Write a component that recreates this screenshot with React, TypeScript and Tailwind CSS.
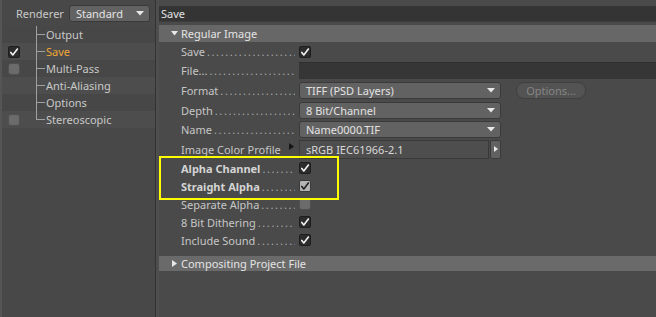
import React from "react";

const Check = ({ light = false }: { light?: boolean }) => (
  <svg width="10" height="10" viewBox="0 0 10 10" className="block">
    <path
      d="M1.8 5.4 L3.8 8 L8.4 2"
      fill="none"
      stroke={light ? "#222" : "#f2f2f2"}
      strokeWidth="1.6"
      strokeLinecap="round"
      strokeLinejoin="round"
    />
  </svg>
);

const Checkbox = ({ state }: { state: "on" | "off" | "hover" }) => {
  if (state === "on")
    return (
      <div className="w-[12px] h-[12px] rounded-[2px] border border-[#1e1e1e] bg-[#2c2c2c] flex items-center justify-center">
        <Check />
      </div>
    );
  if (state === "hover")
    return (
      <div className="w-[12px] h-[12px] rounded-[2px] border border-[#3a3a3a] bg-[#b4b4b4] flex items-center justify-center">
        <Check light />
      </div>
    );
  return <div className="w-[12px] h-[12px] rounded-[3px] border border-[#505050] bg-[#6b6b6b]" />;
};

const Arrow = () => (
  <svg width="8" height="5" viewBox="0 0 8 5" className="block shrink-0">
    <path d="M0 0 L8 0 L4 4.5 Z" fill="#e8e8e8" />
  </svg>
);

const Dropdown = ({ text, w }: { text: string; w: string }) => (
  <div
    className={`${w} h-[17px] rounded-[3px] border border-[#3a3a3a] bg-[#626262] flex items-center justify-between pl-[6px] pr-[5px] text-[#e2e2e2]`}
  >
    <span className="whitespace-nowrap">{text}</span>
    <Arrow />
  </div>
);

const Dots = () => (
  <span className="flex-1 overflow-hidden whitespace-nowrap text-[#a8a8a8] tracking-[1.6px] pl-[2px]">
    {"..................................."}
  </span>
);

const Label = ({ text, bold = false }: { text: string; bold?: boolean }) => (
  <div className="w-[140px] pl-[22px] pr-[4px] flex items-center whitespace-nowrap">
    <span className={bold ? "font-bold text-[#d4d4d4]" : "text-[#c6c6c6]"}>{text}</span>
    <Dots />
  </div>
);

const TreeRow = ({
  text,
  cb,
  active = false,
  last = false,
  light = false,
}: {
  text: string;
  cb?: "on" | "off";
  active?: boolean;
  last?: boolean;
  light?: boolean;
}) => (
  <div className={`h-[17px] flex items-stretch ${light ? "bg-[#4d4d4d]" : "bg-[#474747]"}`}>
    <div className="w-[34px] pl-[6px] flex items-center">{cb ? <Checkbox state={cb} /> : null}</div>
    <div className="w-[9px] flex flex-col">
      <div className="h-[9px] border-l border-b border-[#a0a0a0]" />
      <div className={`flex-1 ${last ? "" : "border-l border-[#a0a0a0]"}`} />
    </div>
    <div className={`flex items-center pl-[1px] ${active ? "text-[#f0a635]" : "text-[#c8c8c8]"}`}>{text}</div>
  </div>
);

export default function App() {
  return (
    <div
      className="w-[656px] h-[317px] bg-[#4a4a4a] flex overflow-hidden text-[11px] leading-none relative"
      style={{ fontFamily: '"Noto Sans", "DejaVu Sans", sans-serif' }}
    >
      {/* Left panel */}
      <div className="w-[155px] flex flex-col bg-[#484848] border-l-[2px] border-[#555]">
        <div className="h-[26px] flex items-center pl-[14px]">
          <span className="text-[#c8c8c8] mr-[5px]">Renderer</span>
          <Dropdown text="Standard" w="w-[81px]" />
        </div>
        <TreeRow text="Output" />
        <TreeRow text="Save" cb="on" active light />
        <TreeRow text="Multi-Pass" cb="off" />
        <TreeRow text="Anti-Aliasing" light />
        <TreeRow text="Options" />
        <TreeRow text="Stereoscopic" cb="off" last light />
        <div className="flex-1" />
      </div>

      {/* Separator */}
      <div className="w-[1px] bg-[#333]" />
      <div className="w-[3px] bg-[#4e4e4e]" />

      {/* Right panel */}
      <div className="flex-1 flex flex-col pt-[6px]">
        <div className="h-[16px] bg-[#343434] flex items-center pl-[2px] text-[#e2e2e2] border-b border-[#3c3c3c]">
          Save
        </div>
        <div className="h-[3px]" />
        <div className="h-[17px] bg-[#676767] flex items-center pl-[12px] text-[#e4e4e4]">
          <svg width="7" height="5" viewBox="0 0 7 5" className="mr-[3px]">
            <path d="M0 0 L7 0 L3.5 4.5 Z" fill="#e8e8e8" />
          </svg>
          Regular Image
        </div>

        <div className="h-[19px] flex items-center">
          <Label text="Save" />
          <Checkbox state="on" />
        </div>
        <div className="h-[19px] flex items-center">
          <Label text="File..." />
          <div className="flex-1 h-[17px] bg-[#363636] border-t border-[#2e2e2e]" />
        </div>
        <div className="h-[20px] flex items-center">
          <Label text="Format" />
          <Dropdown text="TIFF (PSD Layers)" w="w-[202px]" />
          <div className="ml-[15px] w-[70px] h-[17px] rounded-[8px] border border-[#404040] bg-[#535353] flex items-center justify-center text-[#858585]">
            Options...
          </div>
        </div>
        <div className="h-[20px] flex items-center">
          <Label text="Depth" />
          <Dropdown text="8 Bit/Channel" w="w-[202px]" />
        </div>
        <div className="h-[19px] flex items-center">
          <Label text="Name" />
          <Dropdown text="Name0000.TIF" w="w-[202px]" />
        </div>
        <div className="h-[20px] flex items-center">
          <div className="w-[140px] pl-[22px] pr-[4px] flex items-center whitespace-nowrap">
            <span className="text-[#c6c6c6]">Image Color Profile</span>
            <span className="flex-1" />
            <svg width="5" height="7" viewBox="0 0 5 7" className="mb-[6px] mr-[1px]">
              <path d="M0 0 L5 3.5 L0 7 Z" fill="#151515" />
            </svg>
          </div>
          <div className="w-[190px] h-[19px] border border-[#3a3a3a] bg-[#4e4e4e] flex items-center pl-[6px] text-[#d8d8d8]">
            sRGB IEC61966-2.1
          </div>
          <div className="ml-[1px] w-[11px] h-[19px] rounded-[2px] border border-[#3a3a3a] bg-[#616161] flex items-center justify-center">
            <svg width="4" height="6" viewBox="0 0 4 6">
              <path d="M0 0 L4 3 L0 6 Z" fill="#e8e8e8" />
            </svg>
          </div>
        </div>
        <div className="h-[18px] flex items-center">
          <Label text="Alpha Channel" bold />
          <Checkbox state="on" />
        </div>
        <div className="h-[18px] flex items-center">
          <Label text="Straight Alpha" bold />
          <Checkbox state="hover" />
        </div>
        <div className="h-[18px] flex items-center">
          <Label text="Separate Alpha" />
          <Checkbox state="off" />
        </div>
        <div className="h-[18px] flex items-center">
          <Label text="8 Bit Dithering" />
          <Checkbox state="on" />
        </div>
        <div className="h-[18px] flex items-center">
          <Label text="Include Sound" />
          <Checkbox state="on" />
        </div>

        <div className="h-[7px]" />
        <div className="h-[15px] bg-[#6a6a6a] flex items-center pl-[13px] text-[#e4e4e4]">
          <svg width="5" height="7" viewBox="0 0 5 7" className="mr-[4px]">
            <path d="M0 0 L5 3.5 L0 7 Z" fill="#e8e8e8" />
          </svg>
          Compositing Project File
        </div>
      </div>

      {/* Yellow annotation */}
      <div className="absolute left-[159px] top-[156px] w-[180px] h-[44px] border-[2px] border-[#ffff00]" />
    </div>
  );
}
